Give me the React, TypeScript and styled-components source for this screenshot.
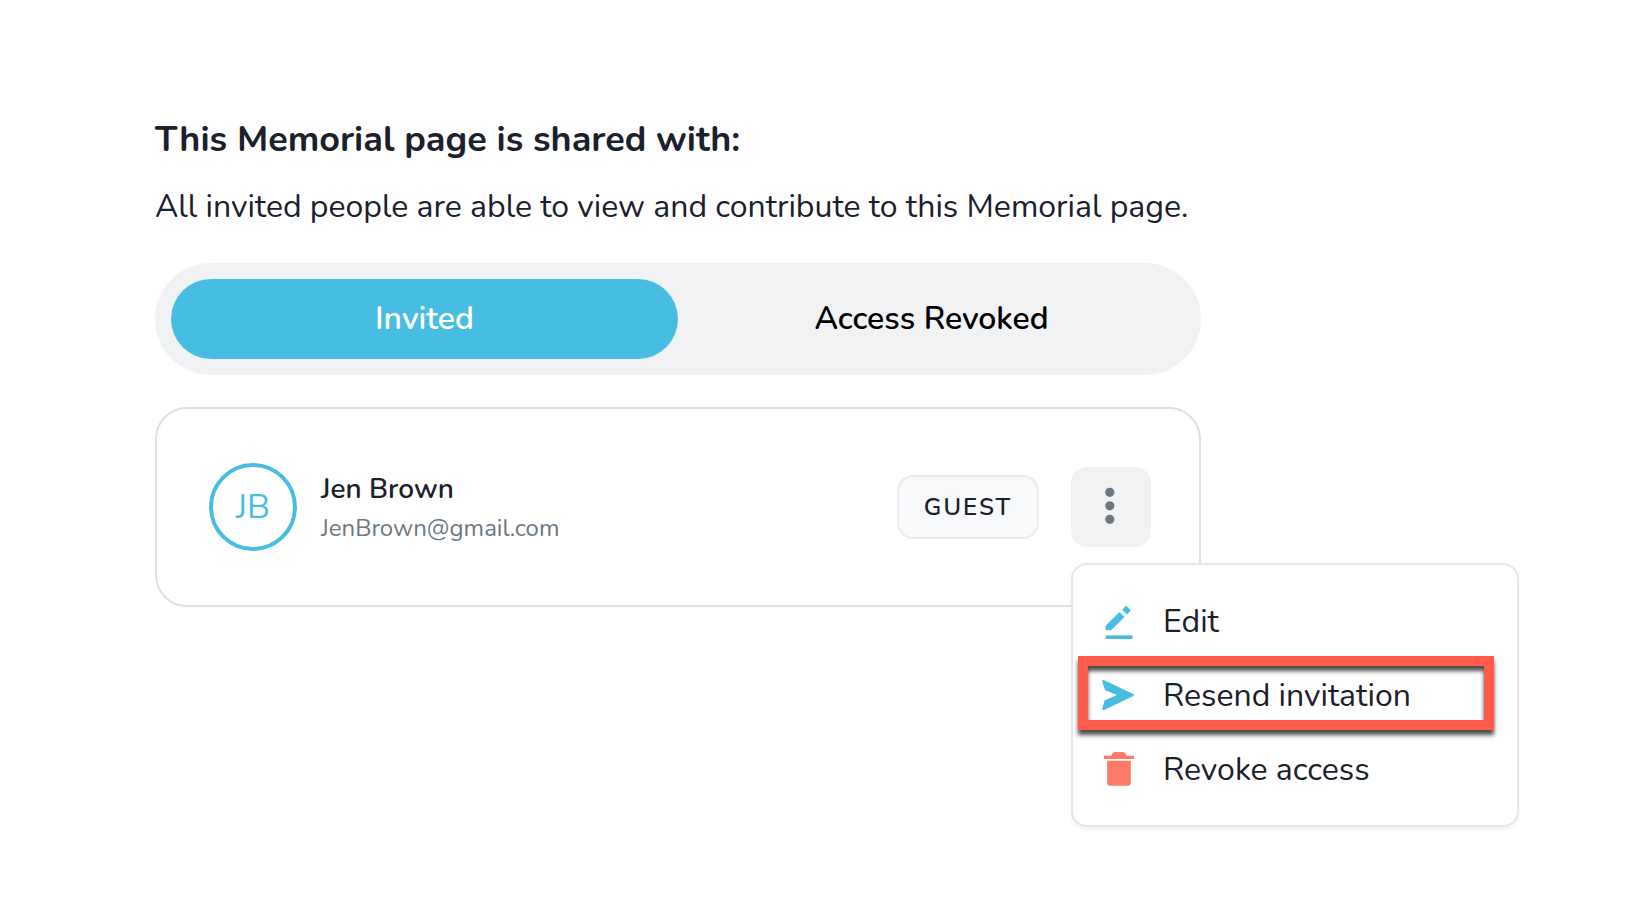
import React, { useState } from "react";
import styled, { createGlobalStyle } from "styled-components";

const color = {
  ink: "#1a202c",
  muted: "#6c7883",
  accent: "#47bee1",
  danger: "#ff7a66",
  surface: "#f1f2f4",
  line: "#dde1e6",
  menuLine: "#e2e8f2",
  highlight: "#ff5a4b",
};

const GlobalStyle = createGlobalStyle`
  *, *::before, *::after { box-sizing: border-box; }
  body {
    margin: 0;
    background: #ffffff;
    color: ${color.ink};
    font-family: Nunito, Lato, "Liberation Sans", sans-serif;
  }
  button { font: inherit; color: inherit; border: 0; cursor: pointer; }
`;

const Page = styled.main`
  max-width: 1201px;
  min-height: 100vh;
  padding: 116px 0 80px 155px;
`;

const Title = styled.h1`
  margin: 0;
  font-size: 36px;
  font-weight: 700;
  line-height: 48px;
`;

const Description = styled.p`
  margin: 19px 0 0;
  font-size: 32px;
  line-height: 48px;
`;

const Tabs = styled.div`
  display: flex;
  margin-top: 32px;
  padding: 16px;
  border-radius: 56px;
  background: ${color.surface};
`;

const Tab = styled.button<{ $active: boolean }>`
  flex: 1;
  height: 80px;
  padding: 0 0 2px;
  border-radius: 40px;
  background: ${(p) => (p.$active ? color.accent : "transparent")};
  color: ${(p) => (p.$active ? "#ffffff" : "#000000")};
  font-size: 32px;
  font-weight: 600;
`;

const GuestCard = styled.section`
  display: flex;
  align-items: center;
  height: 200px;
  margin-top: 32px;
  padding: 0 48px 0 52px;
  border: 2px solid ${color.line};
  border-radius: 32px;
`;

const Avatar = styled.div`
  display: grid;
  place-items: center;
  width: 88px;
  height: 88px;
  border: 4px solid ${color.accent};
  border-radius: 50%;
  color: ${color.accent};
  font-size: 34px;
`;

const Identity = styled.div`
  flex: 1;
  margin-left: 24px;
  padding-top: 2px;
`;

const Name = styled.div`
  font-size: 28px;
  font-weight: 600;
  line-height: 40px;
`;

const Email = styled.div`
  color: ${color.muted};
  font-size: 24px;
  line-height: 38px;
`;

const RoleBadge = styled.span`
  display: grid;
  place-items: center;
  width: 142px;
  height: 64px;
  border: 2px solid #e9ebef;
  border-radius: 16px;
  background: #f8f9fb;
  font-size: 24px;
  font-weight: 600;
  letter-spacing: 2px;
`;

const MenuAnchor = styled.div`
  position: relative;
  margin-left: 32px;
`;

const MoreButton = styled.button`
  display: grid;
  place-items: center;
  width: 80px;
  height: 80px;
  padding: 0;
  border-radius: 16px;
  background: ${color.surface};
`;

const Menu = styled.div`
  position: absolute;
  top: calc(100% + 16px);
  left: 0;
  width: 448px;
  padding: 19px 0;
  border: 2px solid ${color.menuLine};
  border-radius: 16px;
  background: #ffffff;
  box-shadow: 0 2px 4px rgba(0, 0, 0, 0.06);
`;

const MenuItem = styled.button`
  position: relative;
  display: flex;
  align-items: center;
  gap: 24px;
  width: 100%;
  height: 74px;
  padding: 0 26px;
  background: transparent;
  font-size: 32px;
  text-align: left;
`;

const Highlight = styled.span`
  position: absolute;
  inset: -2px 23px 2px 5px;
  border: 10px solid ${color.highlight};
  filter: drop-shadow(0 5px 2px rgba(0, 0, 0, 0.7));
  pointer-events: none;
`;

const DotsIcon = () => (
  <svg width="40" height="40" viewBox="0 0 40 40" fill={color.muted} aria-hidden="true">
    <circle cx="18.800" cy="5.300" r="4.600" />
    <circle cx="18.800" cy="18.800" r="4.600" />
    <circle cx="18.800" cy="32.300" r="4.600" />
  </svg>
);

const EditIcon = () => (
  <svg width="40" height="40" viewBox="0 0 40 40" fill={color.accent} aria-hidden="true">
    <path d="M6.700 29.200V24.700L20.500 10.900L25.500 15.900L12 29.200Z" />
    <path d="M23.200 8.900L27 4.600L31.800 9.400L28 13.600Z" />
    <path d="M6.700 34.400H33.500V38H6.700Z" />
  </svg>
);

const SendIcon = () => (
  <svg width="40" height="40" viewBox="0 0 40 40" fill={color.accent} aria-hidden="true">
    <path d="M5.300 5.200L34.200 19Q36 20 34.200 21L5.300 34.900Q3 35.600 3.200 33.600L5.600 25.700Q5.800 25.100 6.500 24.900L18 20L6.900 15.600Q6 15.200 5.800 14.500L3.200 6.800Q2.800 4.500 5.300 5.200Z" />
  </svg>
);

const TrashIcon = () => (
  <svg width="40" height="40" viewBox="0 0 40 40" fill={color.danger} aria-hidden="true">
    <path d="M5 6.800H12.300Q13.200 3 16 3H24.200Q26.500 3 27.600 6.800H35V10H5Z" />
    <path d="M8.200 11.800H31.800V33.500Q31.800 36.800 28.500 36.800H11.500Q8.200 36.800 8.200 33.500Z" />
  </svg>
);

const tabs = ["Invited", "Access Revoked"];

const actions = [
  { label: "Edit", Icon: EditIcon, highlighted: false },
  { label: "Resend invitation", Icon: SendIcon, highlighted: true },
  { label: "Revoke access", Icon: TrashIcon, highlighted: false },
];

export default function App() {
  const [activeTab, setActiveTab] = useState(tabs[0]);
  const [menuOpen, setMenuOpen] = useState(true);

  return (
    <>
      <GlobalStyle />
      <Page>
        <Title>This Memorial page is shared with:</Title>
        <Description>
          All invited people are able to view and contribute to this Memorial page.
        </Description>
        <Tabs role="tablist">
          {tabs.map((tab) => (
            <Tab
              key={tab}
              type="button"
              role="tab"
              aria-selected={tab === activeTab}
              $active={tab === activeTab}
              onClick={() => setActiveTab(tab)}
            >
              {tab}
            </Tab>
          ))}
        </Tabs>
        <GuestCard>
          <Avatar>JB</Avatar>
          <Identity>
            <Name>Jen Brown</Name>
            <Email>JenBrown@gmail.com</Email>
          </Identity>
          <RoleBadge>GUEST</RoleBadge>
          <MenuAnchor>
            <MoreButton
              type="button"
              aria-label="More actions"
              aria-haspopup="menu"
              aria-expanded={menuOpen}
              onClick={() => setMenuOpen(!menuOpen)}
            >
              <DotsIcon />
            </MoreButton>
            {menuOpen && (
              <Menu role="menu">
                {actions.map(({ label, Icon, highlighted }) => (
                  <MenuItem key={label} type="button" role="menuitem">
                    <Icon />
                    {label}
                    {highlighted && <Highlight />}
                  </MenuItem>
                ))}
              </Menu>
            )}
          </MenuAnchor>
        </GuestCard>
      </Page>
    </>
  );
}
